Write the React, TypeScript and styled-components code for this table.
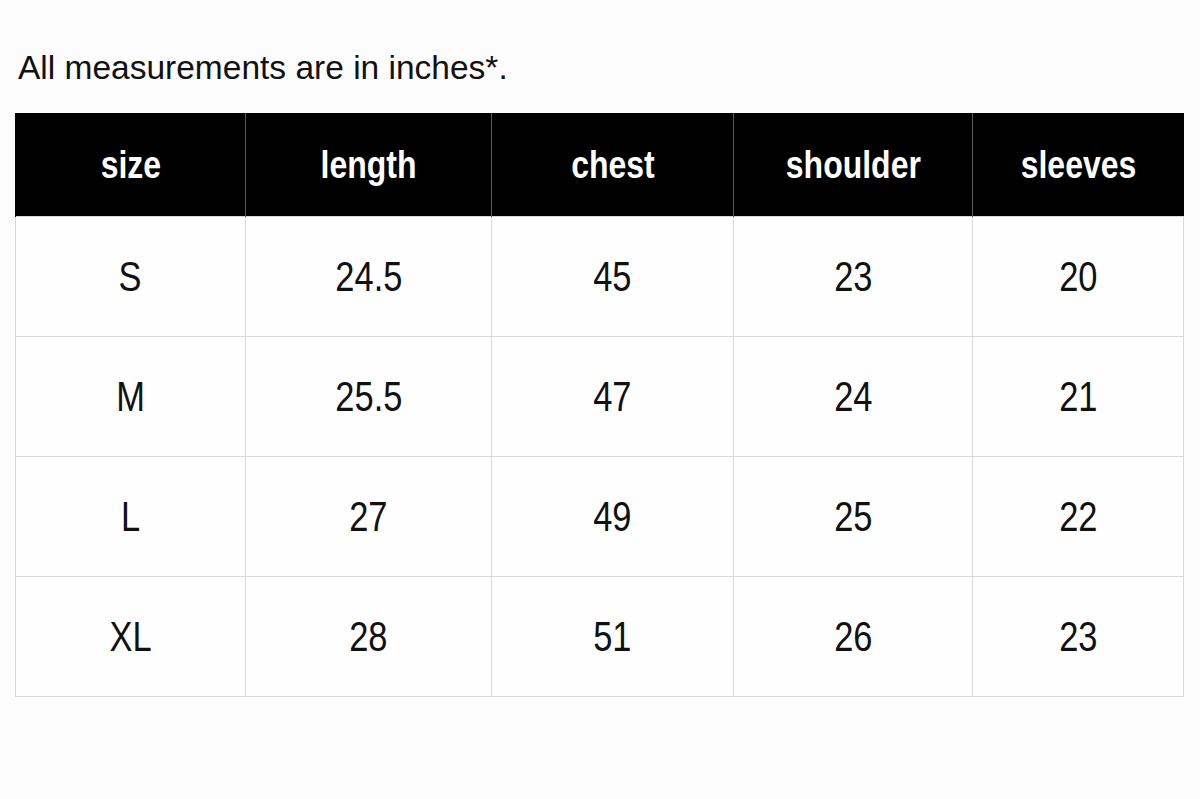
import React from "react";
import styled, { createGlobalStyle } from "styled-components";

const Global = createGlobalStyle`
  html, body { margin: 0; padding: 0; background: #fcfcfc; }
  body { font-family: "Liberation Sans", Arial, sans-serif; color: #111; }
`;

const Page = styled.div`
  width: 1200px;
  height: 799px;
  box-sizing: border-box;
  padding: 48px 0 0 15px;
  display: flex;
  flex-direction: column;
  gap: 25px;
`;

const Title = styled.h1`
  margin: 0 0 0 3px;
  font-family: "Liberation Sans", Arial, sans-serif;
  font-weight: 400;
  font-size: 33.5px;
  line-height: 40px;
  color: #111;
`;

const Table = styled.table`
  border-collapse: collapse;
  table-layout: fixed;
  width: 1168px;
  background: #fefefe;
`;

const HeadCell = styled.th`
  height: 103px;
  padding: 0;
  background: #000;
  color: #fff;
  font-family: "Liberation Sans", Arial, sans-serif;
  font-weight: 700;
  font-size: 39px;
  text-align: center;
  vertical-align: middle;
  border-left: 1px solid #5a5a5a;
  &:first-child { border-left: 1px solid #000; }
`;

const BodyCell = styled.td`
  height: 119px;
  padding: 0;
  font-family: "Liberation Sans", Arial, sans-serif;
  font-weight: 400;
  font-size: 42px;
  color: #111;
  text-align: center;
  vertical-align: middle;
  border: 1px solid #d8d8d8;
`;

const Narrow = styled.span`
  display: inline-block;
  transform: scaleX(0.82);
  transform-origin: center;
`;

const widths = [230, 246, 242, 239, 211];
const headers = ["size", "length", "chest", "shoulder", "sleeves"];
const rows = [
  ["S", "24.5", "45", "23", "20"],
  ["M", "25.5", "47", "24", "21"],
  ["L", "27", "49", "25", "22"],
  ["XL", "28", "51", "26", "23"],
];

export default function App() {
  return (
    <>
      <Global />
      <Page>
        <Title>All measurements are in inches*.</Title>
        <Table>
          <colgroup>
            {widths.map((w, i) => (
              <col key={i} style={{ width: w }} />
            ))}
          </colgroup>
          <thead>
            <tr>
              {headers.map((h) => (
                <HeadCell key={h}>
                  <Narrow>{h}</Narrow>
                </HeadCell>
              ))}
            </tr>
          </thead>
          <tbody>
            {rows.map((r) => (
              <tr key={r[0]}>
                {r.map((c, i) => (
                  <BodyCell key={i}>
                    <Narrow>{c}</Narrow>
                  </BodyCell>
                ))}
              </tr>
            ))}
          </tbody>
        </Table>
      </Page>
    </>
  );
}
